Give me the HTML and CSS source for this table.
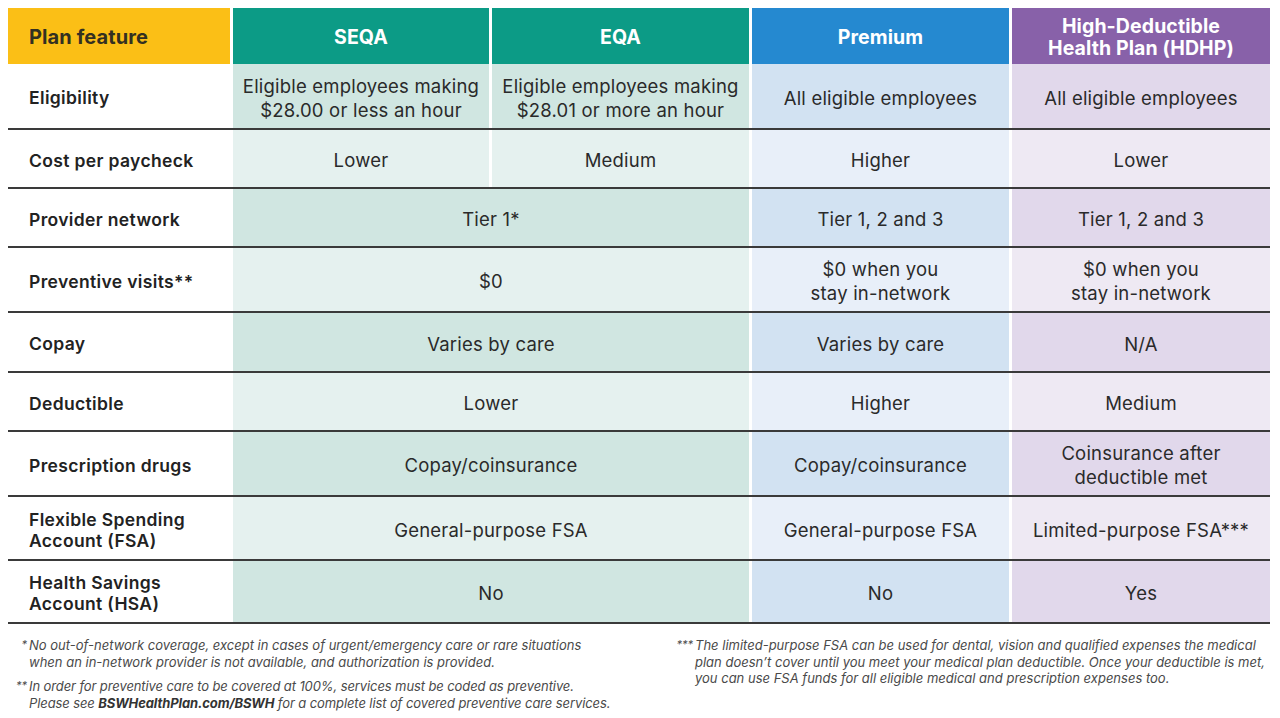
FILE: index.html
```html
<!DOCTYPE html>
<html lang="en">
<head>
<meta charset="utf-8">
<title>Plan comparison</title>
<link rel="stylesheet" href="styles.css">
</head>
<body>
<div class="table">
  <div class="row head">
    <div class="cell feat hd-yellow">Plan feature</div>
    <div class="cell hd hd-teal">SEQA</div>
    <div class="cell hd hd-teal">EQA</div>
    <div class="cell hd hd-blue">Premium</div>
    <div class="cell hd hd-purple">High-Deductible<br>Health Plan (HDHP)</div>
  </div>
  <div class="row first dark">
    <div class="cell feat">Eligibility</div>
    <div class="cell teal">Eligible employees making<br>$28.00 or less an hour</div>
    <div class="cell teal">Eligible employees making<br>$28.01 or more an hour</div>
    <div class="cell blue">All eligible employees</div>
    <div class="cell purple">All eligible employees</div>
  </div>
  <div class="row light">
    <div class="cell feat">Cost per paycheck</div>
    <div class="cell teal">Lower</div>
    <div class="cell teal">Medium</div>
    <div class="cell blue">Higher</div>
    <div class="cell purple">Lower</div>
  </div>
  <div class="row dark">
    <div class="cell feat">Provider network</div>
    <div class="cell teal span2">Tier 1*</div>
    <div class="cell blue">Tier 1, 2 and 3</div>
    <div class="cell purple">Tier 1, 2 and 3</div>
  </div>
  <div class="row tall light">
    <div class="cell feat">Preventive visits**</div>
    <div class="cell teal span2">$0</div>
    <div class="cell blue">$0 when you<br>stay in-network</div>
    <div class="cell purple">$0 when you<br>stay in-network</div>
  </div>
  <div class="row mid dark">
    <div class="cell feat">Copay</div>
    <div class="cell teal span2">Varies by care</div>
    <div class="cell blue">Varies by care</div>
    <div class="cell purple">N/A</div>
  </div>
  <div class="row light">
    <div class="cell feat">Deductible</div>
    <div class="cell teal span2">Lower</div>
    <div class="cell blue">Higher</div>
    <div class="cell purple">Medium</div>
  </div>
  <div class="row tall dark">
    <div class="cell feat">Prescription drugs</div>
    <div class="cell teal span2">Copay/coinsurance</div>
    <div class="cell blue">Copay/coinsurance</div>
    <div class="cell purple">Coinsurance after<br>deductible met</div>
  </div>
  <div class="row tall2 light">
    <div class="cell feat">Flexible Spending<br>Account (FSA)</div>
    <div class="cell teal span2">General-purpose FSA</div>
    <div class="cell blue">General-purpose FSA</div>
    <div class="cell purple">Limited-purpose FSA***</div>
  </div>
  <div class="row tall3 dark">
    <div class="cell feat">Health Savings<br>Account (HSA)</div>
    <div class="cell teal span2">No</div>
    <div class="cell blue">No</div>
    <div class="cell purple">Yes</div>
  </div>
</div>
<div class="notes">
  <div class="notes-col left">
    <p class="note"><span class="mark">*</span><span class="text">No out-of-network coverage, except in cases of urgent/emergency care or rare situations<br>when an in-network provider is not available, and authorization is provided.</span></p>
    <p class="note"><span class="mark">**</span><span class="text tight">In order for preventive care to be covered at 100%, services must be coded as preventive.<br>Please see <b class="link">BSWHealthPlan.com/BSWH</b> for a complete list of covered preventive care services.</span></p>
  </div>
  <div class="notes-col right">
    <p class="note"><span class="mark">***</span><span class="text">The limited-purpose FSA can be used for dental, vision and qualified expenses the medical<br>plan doesn’t cover until you meet your medical plan deductible. Once your deductible is met,<br>you can use FSA funds for all eligible medical and prescription expenses too.</span></p>
  </div>
</div>
</body>
</html>
```

FILE: styles.css
```css
html, body {
  background: #ffffff;
}
body {
  margin: 8px;
  font-family: Inter, "Liberation Sans", sans-serif;
  color: #262626;
}
.table {
  width: 1262px;
}
.row {
  display: grid;
  grid-template-columns: 222px 256px 257px 257px 258px;
  column-gap: 3px;
  height: 57px;
  border-bottom: 2px solid #3a3a3a;
}
.row.head {
  height: 56px;
  border-bottom: none;
}
.row.first { height: 64px; }
.row.tall { height: 63px; }
.row.mid { height: 58px; }
.row.tall2 { height: 62px; }
.row.tall3 { height: 61px; }
.cell {
  display: flex;
  align-items: center;
  justify-content: center;
  text-align: center;
  padding-top: 3px;
  font-size: 18.5px;
  line-height: 24px;
  letter-spacing: 0.2px;
  color: #2a2a2a;
}
.span2 {
  grid-column: span 2;
}
.cell.feat {
  justify-content: flex-start;
  text-align: left;
  padding-left: 21px;
  font-weight: 600;
  font-size: 17.5px;
  line-height: 21px;
  letter-spacing: 0.35px;
  color: #222;
  background: #fff;
}
.hd {
  color: #ffffff;
  font-weight: 700;
  font-size: 19.5px;
  line-height: 22px;
  letter-spacing: 0.1px;
  padding-top: 2px;
}
.hd-yellow.cell.feat {
  background: #fbbf16;
  color: #333021;
  font-size: 20px;
  font-weight: 700;
  letter-spacing: 0.1px;
}
.hd-teal { background: #0c9b86; }
.hd-blue { background: #2589d0; }
.hd-purple { background: #8861a9; }

.dark .teal { background: #d0e6e1; }
.light .teal { background: #e5f1ef; }
.dark .blue { background: #d2e2f2; }
.light .blue { background: #e8eff9; }
.dark .purple { background: #e1d8eb; }
.light .purple { background: #eee9f3; }

.notes {
  display: flex;
  padding-top: 13px;
  font-style: italic;
  font-size: 13px;
  line-height: 16.5px;
  color: #4a4a4a;
}
.notes-col.left {
  width: 612px;
  display: flex;
  flex-direction: column;
  gap: 8px;
}
.notes-col.right {
  margin-left: 52px;
  width: 600px;
}
.note {
  display: flex;
  margin: 0;
  white-space: nowrap;
}
.note .mark {
  flex: none;
  text-align: right;
  padding-right: 2px;
  font-size: 11px;
  line-height: 15px;
}
.left .note .mark { width: 19px; }
.right .note .mark { width: 21px; }
.note .text.tight {
  letter-spacing: -0.1px;
}
.note .text .link {
  font-weight: 700;
  color: #333;
}
```
